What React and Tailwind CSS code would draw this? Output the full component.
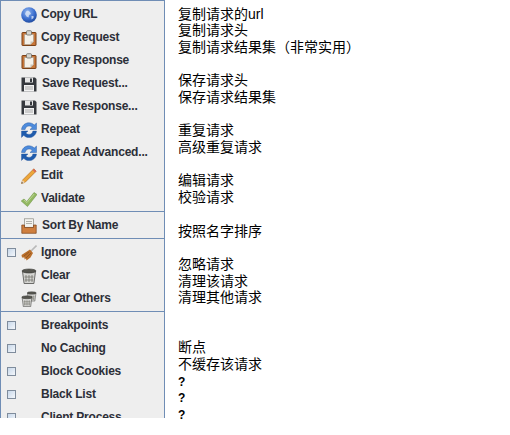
const Globe = () => (
  <svg width="16" height="16" viewBox="0 0 16 16">
    <defs><radialGradient id="g" cx="0.4" cy="0.3" r="0.8"><stop offset="0" stopColor="#8fb4ee" /><stop offset="0.55" stopColor="#3d70d0" /><stop offset="1" stopColor="#173f8f" /></radialGradient></defs>
    <circle cx="8" cy="8" r="7.8" fill="url(#g)" />
    <path d="M5 4.5l2-1 2 1.5 1 2-2 1-.5 2.5-2-1-1.5-2.5zM10.5 9l2 0 0 2-2 1.5z" fill="#dfe9f8" opacity="0.8" />
  </svg>
);
const Clip = () => (
  <svg width="16" height="16" viewBox="0 0 16 16">
    <rect x="1" y="2.5" width="14" height="13" rx="0.5" fill="#c8773a" stroke="#7b4218" />
    <path d="M3.5 4.5h9v7l-3 3h-6z" fill="#f4f1ea" stroke="#9a9a90" strokeWidth="0.5" />
    <path d="M12.5 11.5l-3 3v-3z" fill="#c9c5b8" />
    <rect x="5.5" y="0.7" width="5" height="4.3" rx="1" fill="#d5d5d0" stroke="#6d6d68" strokeWidth="0.8" />
  </svg>
);
const Disk = () => (
  <svg width="16" height="16" viewBox="0 0 16 16">
    <path d="M0.5 1.5h13.5L15.5 3V15.5H0.5z" fill="#35383d" />
    <rect x="4" y="1.5" width="8" height="5" fill="#e5e5e5" />
    <rect x="9" y="2.5" width="2" height="3.5" fill="#35383d" />
    <rect x="3" y="9" width="10" height="6.5" fill="#f2f2f2" />
    <path d="M4 11h8M4 13h8" stroke="#a8a8a8" />
  </svg>
);
const Repeat = () => (
  <svg width="16" height="16" viewBox="0 0 16 16">
    <path d="M0.5 7.5C1 3.4 4.2 0.8 8 0.8c2.2 0 4 .9 5.2 2.3L15.5 1V7.5H9l2.2-2.1C10.4 4.5 9.4 4 8 4 6 4 4.5 5.2 4.1 7.5z" fill="#4d8bdc" stroke="#1f5299" strokeWidth="0.4" />
    <path d="M15.5 9c-.5 4-3.7 6.6-7.5 6.6-2.2 0-4-.9-5.2-2.3L0.5 15.4V9H7l-2.2 2.1C5.6 11.9 6.6 12.4 8 12.4c2 0 3.5-1.2 3.9-3.4z" fill="#1f5cad" stroke="#1f5299" strokeWidth="0.4" />
  </svg>
);
const Pencil = () => (
  <svg width="16" height="16" viewBox="0 0 16 16">
    <path d="M0.5 15.5L1.6 12 12.8 0.8 15.2 3.2 4 14.4z" fill="#eda63a" stroke="#a9661c" strokeWidth="0.6" />
    <path d="M12.8 0.8L15.2 3.2 14 4.4 11.6 2z" fill="#d9675a" />
    <path d="M0.5 15.5L1.6 12 4 14.4z" fill="#e9d1ae" />
    <path d="M0.5 15.5l.4-1.5 1.1 1.1z" fill="#3a3a3a" />
  </svg>
);
const Check = () => (
  <svg width="16" height="16" viewBox="0 0 16 16">
    <path d="M0.2 10L3 8 5.8 10.5 13 1.5 16 3.5 6.5 15.5z" fill="#93b862" stroke="#648f38" strokeWidth="0.5" />
    <path d="M3 9l3 2.5L13.2 3" fill="none" stroke="#c6dc9f" strokeWidth="0.8" />
  </svg>
);
const Tray = () => (
  <svg width="16" height="16" viewBox="0 0 16 16">
    <rect x="3.5" y="0.8" width="9" height="8.5" fill="#f3f3ef" stroke="#8b8b85" strokeWidth="0.7" />
    <path d="M5 3.5h6M5 5.5h6" stroke="#b0b0aa" />
    <path d="M0.8 7h2.7v2.5h9V7h2.7v8.3H0.8z" fill="#cf7f3f" stroke="#7b4218" strokeWidth="0.7" />
  </svg>
);
const Broom = () => (
  <svg width="16" height="16" viewBox="0 0 16 16">
    <path d="M9.5 6.5L15.5 0.5" stroke="#b9b9b9" strokeWidth="1.6" />
    <path d="M9 4.5L12 8 9.5 12.5 5.5 15.5 5 13.5 3.5 14.5 3.5 12.5 1 12.5 0.5 10z" fill="#b96f2c" />
    <path d="M3 11l5-4M5 13l5-5" stroke="#80481a" strokeWidth="0.6" />
  </svg>
);
const Bin = () => (
  <g>
    <path d="M1.5 3.5h13l-1.6 12H3.1z" fill="#d5d5d2" stroke="#4c4c4a" strokeWidth="0.8" />
    <ellipse cx="8" cy="3" rx="7" ry="2" fill="#55554f" stroke="#3a3a38" strokeWidth="0.6" />
    <path d="M5 7v7M8 7v7M11 7v7M3.5 9h9M3.8 12h8.4" stroke="#77776f" strokeWidth="0.8" />
  </g>
);
const Trash = () => <svg width="16" height="16" viewBox="0 0 16 16"><Bin /></svg>;
const Trash2 = () => (
  <svg width="16" height="16" viewBox="0 0 16 16">
    <g transform="translate(5.5 0) scale(0.65)"><Bin /></g>
    <g transform="translate(0 4) scale(0.75)"><Bin /></g>
  </svg>
);

const Box = () => (
  <span className="block w-[9px] h-[9px] border border-[#7f8c9c] bg-gradient-to-br from-[#c8d8ea] to-[#f4f7fb]" />
);

const Row = ({ icon, label, check, shift }) => (
  <div className="flex items-center h-[23px]">
    <span className="w-[20px] pl-[6px] shrink-0">{check && <Box />}</span>
    <span className="w-4 h-4 shrink-0 flex">{icon}</span>
    <span className={`${shift ? "ml-[5px]" : "ml-[4px]"} pb-[2px] text-[12px] tracking-[-0.2px] font-bold text-[#2c2f38] whitespace-nowrap`}>{label}</span>
  </div>
);

const Section = ({ children }) => (
  <div className="pt-[2px] pb-[1px] border-b border-[#6f8db5] last:border-b-0">{children}</div>
);

const lines = [
  "复制请求的url", "复制请求头", "复制请求结果集（非常实用）", "",
  "保存请求头", "保存请求结果集", "",
  "重复请求", "高级重复请求", "",
  "编辑请求", "校验请求", "",
  "按照名字排序", "",
  "忽略请求", "清理该请求", "清理其他请求", "", "",
  "断点", "不缓存该请求", "?", "?", "?",
];

export default function App() {
  return (
    <div className="flex w-[510px] h-[435px] overflow-hidden bg-white font-['Liberation_Sans',sans-serif]">
      <div className="w-[165px] h-[418px] overflow-hidden shrink-0 bg-[#eeeeee] border-x border-t border-[#6f8db5]">
        <Section>
          <Row icon={<Globe />} label="Copy URL" />
          <Row icon={<Clip />} label="Copy Request" />
          <Row icon={<Clip />} label="Copy Response" />
          <Row icon={<Disk />} label="Save Request..." shift />
          <Row icon={<Disk />} label="Save Response..." shift />
          <Row icon={<Repeat />} label="Repeat" />
          <Row icon={<Repeat />} label="Repeat Advanced..." />
          <Row icon={<Pencil />} label="Edit" />
          <Row icon={<Check />} label="Validate" />
        </Section>
        <Section>
          <Row icon={<Tray />} label="Sort By Name" shift />
        </Section>
        <Section>
          <Row check icon={<Broom />} label="Ignore" />
          <Row icon={<Trash />} label="Clear" />
          <Row icon={<Trash2 />} label="Clear Others" />
        </Section>
        <Section>
          <Row check label="Breakpoints" />
          <Row check label="No Caching" />
          <Row check label="Block Cookies" />
          <Row check label="Black List" />
          <Row check label="Client Process" />
        </Section>
      </div>
      <div className="pl-[13px] pt-[5.6px] text-[14px] text-black font-['Liberation_Sans','Noto_Sans_CJK_SC',sans-serif]">
        {lines.map((t, i) => (
          <div key={i} className={`h-[16.7px] leading-[16.7px] whitespace-nowrap ${t === "?" ? "font-bold text-[12px] pt-[1px]" : ""}`}>{t}</div>
        ))}
      </div>
    </div>
  );
}
